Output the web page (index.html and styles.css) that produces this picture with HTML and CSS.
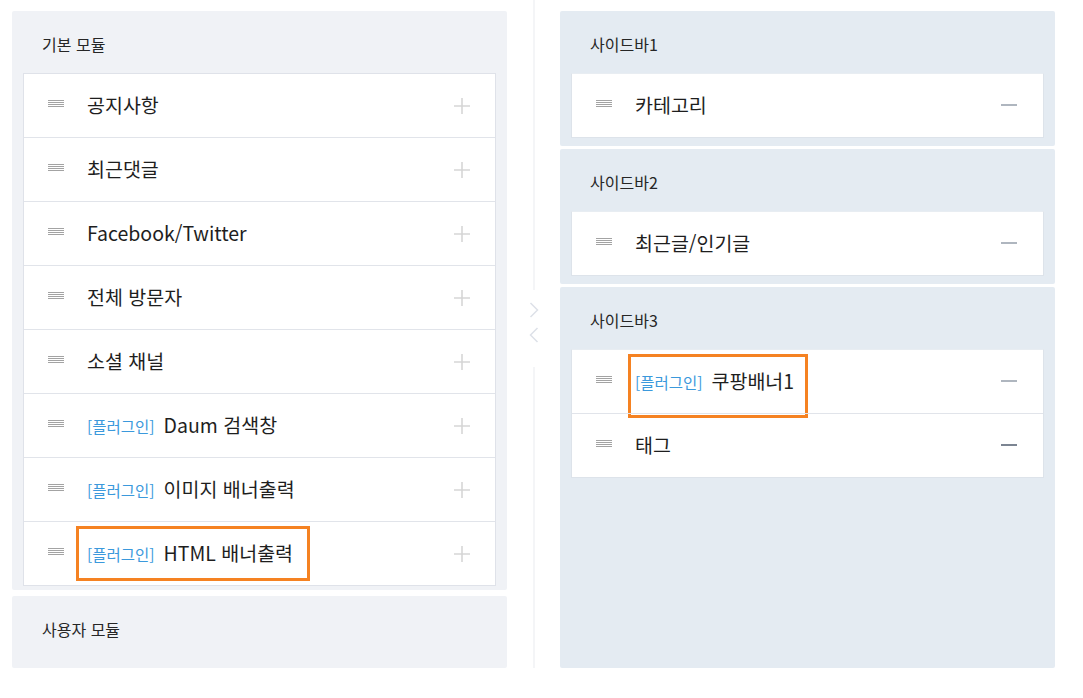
FILE: index.html
```html
<!DOCTYPE html>
<html lang="ko">
<head>
<meta charset="utf-8">
<title>모듈 관리</title>
<link rel="stylesheet" href="styles.css">
</head>
<body>
<div class="page">
  <div class="col col-left">
    <section class="panel panel-basic">
      <h2 class="panel-title">기본 모듈</h2>
      <ul class="list list-basic">
        <li class="row"><span class="handle"><svg width="16" height="8" viewBox="0 0 16 8"><path d="M0 .5h16M0 2.5h16M0 4.5h16M0 6.5h16" stroke="#a3a3a3" stroke-width="1"/></svg></span><span class="name">공지사항</span><span class="act plus"><svg width="16" height="16" viewBox="0 0 16 16"><path d="M8 0v16M0 8h16" stroke="#d6d6d6" stroke-width="1.6"/></svg></span></li>
        <li class="row"><span class="handle"><svg width="16" height="8" viewBox="0 0 16 8"><path d="M0 .5h16M0 2.5h16M0 4.5h16M0 6.5h16" stroke="#a3a3a3" stroke-width="1"/></svg></span><span class="name">최근댓글</span><span class="act plus"><svg width="16" height="16" viewBox="0 0 16 16"><path d="M8 0v16M0 8h16" stroke="#d6d6d6" stroke-width="1.6"/></svg></span></li>
        <li class="row"><span class="handle"><svg width="16" height="8" viewBox="0 0 16 8"><path d="M0 .5h16M0 2.5h16M0 4.5h16M0 6.5h16" stroke="#a3a3a3" stroke-width="1"/></svg></span><span class="name">Facebook/Twitter</span><span class="act plus"><svg width="16" height="16" viewBox="0 0 16 16"><path d="M8 0v16M0 8h16" stroke="#d6d6d6" stroke-width="1.6"/></svg></span></li>
        <li class="row"><span class="handle"><svg width="16" height="8" viewBox="0 0 16 8"><path d="M0 .5h16M0 2.5h16M0 4.5h16M0 6.5h16" stroke="#a3a3a3" stroke-width="1"/></svg></span><span class="name">전체 방문자</span><span class="act plus"><svg width="16" height="16" viewBox="0 0 16 16"><path d="M8 0v16M0 8h16" stroke="#d6d6d6" stroke-width="1.6"/></svg></span></li>
        <li class="row"><span class="handle"><svg width="16" height="8" viewBox="0 0 16 8"><path d="M0 .5h16M0 2.5h16M0 4.5h16M0 6.5h16" stroke="#a3a3a3" stroke-width="1"/></svg></span><span class="name">소셜 채널</span><span class="act plus"><svg width="16" height="16" viewBox="0 0 16 16"><path d="M8 0v16M0 8h16" stroke="#d6d6d6" stroke-width="1.6"/></svg></span></li>
        <li class="row"><span class="handle"><svg width="16" height="8" viewBox="0 0 16 8"><path d="M0 .5h16M0 2.5h16M0 4.5h16M0 6.5h16" stroke="#a3a3a3" stroke-width="1"/></svg></span><span class="name"><span class="tag">[플러그인]</span>Daum 검색창</span><span class="act plus"><svg width="16" height="16" viewBox="0 0 16 16"><path d="M8 0v16M0 8h16" stroke="#d6d6d6" stroke-width="1.6"/></svg></span></li>
        <li class="row"><span class="handle"><svg width="16" height="8" viewBox="0 0 16 8"><path d="M0 .5h16M0 2.5h16M0 4.5h16M0 6.5h16" stroke="#a3a3a3" stroke-width="1"/></svg></span><span class="name"><span class="tag">[플러그인]</span>이미지 배너출력</span><span class="act plus"><svg width="16" height="16" viewBox="0 0 16 16"><path d="M8 0v16M0 8h16" stroke="#d6d6d6" stroke-width="1.6"/></svg></span></li>
        <li class="row"><span class="handle"><svg width="16" height="8" viewBox="0 0 16 8"><path d="M0 .5h16M0 2.5h16M0 4.5h16M0 6.5h16" stroke="#a3a3a3" stroke-width="1"/></svg></span><span class="name"><span class="tag">[플러그인]</span>HTML 배너출력</span><span class="act plus"><svg width="16" height="16" viewBox="0 0 16 16"><path d="M8 0v16M0 8h16" stroke="#d6d6d6" stroke-width="1.6"/></svg></span><span class="highlight hl-left"></span></li>
      </ul>
    </section>
    <section class="panel panel-basic panel-user">
      <h2 class="panel-title">사용자 모듈</h2>
    </section>
  </div>

  <div class="divider">
    <span class="divider-line top"></span>
    <span class="chevrons">
      <svg width="10" height="16" viewBox="0 0 10 16"><path d="M1.5 1l7 7-7 7" fill="none" stroke="#dde1e8" stroke-width="1.5"/></svg>
      <svg width="10" height="16" viewBox="0 0 10 16"><path d="M8.5 1l-7 7 7 7" fill="none" stroke="#dde1e8" stroke-width="1.5"/></svg>
    </span>
    <span class="divider-line bottom"></span>
  </div>

  <div class="col col-right">
    <section class="panel panel-side">
      <h2 class="panel-title">사이드바1</h2>
      <ul class="list list-side">
        <li class="row"><span class="handle"><svg width="16" height="8" viewBox="0 0 16 8"><path d="M0 .5h16M0 2.5h16M0 4.5h16M0 6.5h16" stroke="#a3a3a3" stroke-width="1"/></svg></span><span class="name">카테고리</span><span class="act minus"><svg width="16" height="4" viewBox="0 0 16 4"><path d="M0 2h16" stroke="#8d97a4" stroke-width="1.4"/></svg></span></li>
      </ul>
    </section>
    <section class="panel panel-side">
      <h2 class="panel-title">사이드바2</h2>
      <ul class="list list-side">
        <li class="row"><span class="handle"><svg width="16" height="8" viewBox="0 0 16 8"><path d="M0 .5h16M0 2.5h16M0 4.5h16M0 6.5h16" stroke="#a3a3a3" stroke-width="1"/></svg></span><span class="name">최근글/인기글</span><span class="act minus"><svg width="16" height="4" viewBox="0 0 16 4"><path d="M0 2h16" stroke="#8d97a4" stroke-width="1.4"/></svg></span></li>
      </ul>
    </section>
    <section class="panel panel-side panel-grow">
      <h2 class="panel-title">사이드바3</h2>
      <ul class="list list-side">
        <li class="row"><span class="handle"><svg width="16" height="8" viewBox="0 0 16 8"><path d="M0 .5h16M0 2.5h16M0 4.5h16M0 6.5h16" stroke="#a3a3a3" stroke-width="1"/></svg></span><span class="name"><span class="tag">[플러그인]</span>쿠팡배너1</span><span class="act minus"><svg width="16" height="4" viewBox="0 0 16 4"><path d="M0 2h16" stroke="#8d97a4" stroke-width="1.4"/></svg></span><span class="highlight hl-right"></span></li>
        <li class="row"><span class="handle"><svg width="16" height="8" viewBox="0 0 16 8"><path d="M0 .5h16M0 2.5h16M0 4.5h16M0 6.5h16" stroke="#a3a3a3" stroke-width="1"/></svg></span><span class="name">태그</span><span class="act minus"><svg width="16" height="4" viewBox="0 0 16 4"><path d="M0 2h16" stroke="#7c8592" stroke-width="2"/></svg></span></li>
      </ul>
    </section>
  </div>
</div>
</body>
</html>
```

FILE: styles.css
```css
* { box-sizing: border-box; }

html, body {
  margin: 0;
  padding: 0;
  background: #ffffff;
}

body {
  font-family: "Noto Sans CJK KR", "Noto Sans", sans-serif;
  color: #222;
}

.page {
  display: flex;
  align-items: stretch;
  padding: 11px 0 0 12px;
  height: 668px;
}

.col {
  width: 495px;
  display: flex;
  flex-direction: column;
}

.col-left { gap: 6px; }
.col-right { gap: 3px; }

.panel {
  border-radius: 2px;
  padding: 0 11px 4px;
}

.panel-basic { background: #f0f2f6; }
.panel-side { background: #e4ebf2; padding-bottom: 8px; }
.panel-grow { flex: 1; }
.panel-user { height: 72px; }

.panel-title {
  margin: 0;
  height: 62px;
  padding: 22px 0 0 19px;
  font-size: 16px;
  line-height: 22px;
  font-weight: 400;
  color: #262626;
}

.list {
  list-style: none;
  margin: 0;
  padding: 0;
  background: #fff;
}

.list-basic {
  border: 1px solid #dfe2e9;
}

.list-side {
  border: 1px solid #dde3ea;
  border-top-color: #e8edf2;
}

.row {
  position: relative;
  display: flex;
  align-items: center;
  height: 64px;
  padding: 0 25px 0 24px;
  border-top: 1px solid #e1e4ea;
}

.row:first-child {
  border-top: 0;
  height: 63px;
}

.handle {
  display: flex;
  width: 16px;
  margin-right: 23px;
  margin-bottom: 4px;
}

.name {
  flex: 1;
  font-size: 19.5px;
  line-height: 26px;
  color: #1e1e1e;
  white-space: nowrap;
  margin-bottom: 1px;
}

.tag {
  font-size: 15.5px;
  color: #3b99dc;
  margin-right: 9px;
}

.act {
  display: flex;
  align-items: center;
  justify-content: center;
  width: 16px;
}

.list-side .act { margin-right: 1px; margin-bottom: 2px; }

.highlight {
  position: absolute;
  border: 3px solid #f58222;
  pointer-events: none;
}

.hl-left {
  left: 52px;
  top: 4px;
  width: 234px;
  height: 55px;
}

.hl-right {
  left: 56px;
  top: 4px;
  width: 180px;
  height: 64px;
}

.divider {
  width: 53px;
  display: flex;
  flex-direction: column;
  align-items: center;
  margin-top: -11px;
}

.divider-line {
  width: 2px;
  background: #f4f5f7;
}

.divider-line.top { height: 290px; }
.divider-line.bottom { flex: 1; }

.chevrons {
  display: flex;
  flex-direction: column;
  gap: 9px;
  padding: 12px 0 24px;
}
```
